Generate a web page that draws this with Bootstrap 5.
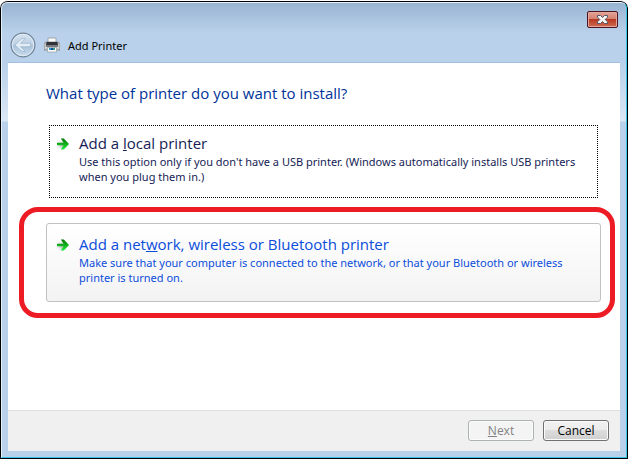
<!DOCTYPE html>
<html lang="en">
<head>
<meta charset="utf-8">
<meta name="viewport" content="width=device-width, initial-scale=1">
<title>Add Printer</title>
<link href="https://cdn.jsdelivr.net/npm/bootstrap@5.3.0/dist/css/bootstrap.min.css" rel="stylesheet">
<style>
  html { background: #fff; }
  body { font-family: "Noto Sans", "Open Sans", sans-serif; font-size: 11px; line-height: 15px; color: #000; background: #000; border-top: 1px solid #fff; border-radius: 8px 8px 0 0; }
  .aero-window {
    margin: 1px 1px 1px 1px; padding: 0 6px 6px 6px;
    border: 1px solid #e4f1fb; border-right: 1px solid #35c4ea; border-bottom: 1px solid #35c4ea;
    border-radius: 6px 6px 0 0;
    background: linear-gradient(#99b4d1 0, #a6c0dc 12px, #b9d1ea 30px, #b9d1ea 60px, #dbe7f5 118px, #b9d1ea 119px);
  }
  .window-bar { height: 59px; padding: 8px 2px 0 2px; }
  .close-btn { width: 31px; height: 17px; border: 1px solid #4a1420; border-radius: 2px; box-shadow: inset 0 0 0 1px #e5a79c; background: linear-gradient(#e3a396 0, #d58271 45%, #b93a22 50%, #cf6c52 100%); }
  .close-btn svg, .nav-back svg { display: block; }
  .caption-row { padding-top: 3px; }
  .client { background: #fff; border-top: 1px solid #a2c0dd; }
  .wizard-body { padding: 19px 19px 0 38px; }
  .wizard-title, .choice-title { font-family: "Open Sans", "Noto Sans", sans-serif; font-size: 15px; line-height: 22px; }
  .wizard-title { color: #003399; }
  .choice-list { padding-top: 18px; gap: 22px; }
  .choice { min-height: 79px; padding: 9px 8px 8px 8px; border: 1px solid transparent; border-radius: 3px; background: none; color: #151c55; }
  .choice-focused { outline: 1px dotted #000; outline-offset: -4px; border-radius: 0; }
  .choice-hot { border-color: #c2c2c2; background: linear-gradient(#fff, #f3f3f3); color: #0b4ddb; }
  .choice-icon { width: 16px; height: 16px; margin: 4px 8px 0 0; }
  .callout-ring { inset: -16px -14px -16px -27px; border: 5px solid #ed1c24; border-radius: 19px; pointer-events: none; }
  .wizard-footer { background: #f0f0f0; border-top: 1px solid #dfdfdf; padding: 9px 11px 10px; gap: 9px; }
  .dialog-btn { width: 66px; height: 21px; padding: 0; border: 1px solid #707070; border-radius: 3px; box-shadow: inset 0 0 0 1px #fbfbfb; background: linear-gradient(#f2f2f2 0, #ebebeb 50%, #dddddd 50%, #cfcfcf 100%); color: #000; font-family: "Open Sans", "Noto Sans", sans-serif; font-size: 12px; line-height: 17px; }
  .dialog-btn:disabled { border-color: #adb2b5; background: #f4f4f4; color: #838383; }
</style>
<script src="https://cdn.jsdelivr.net/npm/bootstrap@5.3.0/dist/js/bootstrap.bundle.min.js"></script>
</head>
<body class="min-vh-100 d-flex flex-column">
<div class="aero-window flex-grow-1 d-flex flex-column">
  <header class="window-bar">
    <div class="d-flex justify-content-end">
      <button type="button" class="close-btn p-0 d-flex align-items-center justify-content-center" aria-label="Close">
        <svg width="13" height="11" viewBox="0 0 13 11"><path d="M1.500 1.500h3l2 2 2-2h3v1.700L9.200 5.500l2.300 2.300v1.700h-3l-2-2-2 2h-3V7.800l2.300-2.300-2.300-2.300z" fill="#f5f5f5" stroke="#535666" stroke-width="1"/></svg>
      </button>
    </div>
    <div class="caption-row d-flex align-items-center">
      <button type="button" class="nav-back border-0 bg-transparent p-0" aria-label="Back">
        <svg width="26" height="28" viewBox="0 0 26 28">
          <defs><linearGradient id="orb" x1="0" y1="0" x2="0" y2="1"><stop offset="0" stop-color="#d5e3f1"/><stop offset=".48" stop-color="#bdd0e3"/><stop offset=".52" stop-color="#a9c2da"/><stop offset="1" stop-color="#c9dcee"/></linearGradient></defs>
          <circle cx="13" cy="14" r="11.900" fill="url(#orb)" stroke="#718398" stroke-width="1.200"/>
          <circle cx="13" cy="14" r="10.700" fill="none" stroke="#e2ecf6" stroke-width="1"/>
          <path d="M5 14l7-6.500h3.200L10.500 12.300H20.500v3.400H10.500l4.700 4.800H12z" fill="#e3edf6" stroke="#8fa9c2" stroke-width=".6" stroke-linejoin="round"/>
        </svg>
      </button>
      <svg class="ms-2 me-2" width="16" height="16" viewBox="0 0 16 16" aria-hidden="true">
        <path d="M4 1h8v6H4z" fill="#fcfcfc" stroke="#96999d" stroke-width=".8"/>
        <path d="M0 6.500l2-1.500h12l2 1.500V13H0z" fill="#c3c5c8" stroke="#777a7e" stroke-width=".7"/>
        <path d="M2.500 5h11l.500 3.500H2z" fill="#303337"/>
        <path d="M2 8.500h12V10H2z" fill="#777b80"/>
        <path d="M1 10.500h14v.8H1z" fill="#ededed"/>
        <path d="M3.500 10.500h9V15h-9z" fill="#fff" stroke="#999c9f" stroke-width=".7"/>
        <path d="M5 11h2v2H5z" fill="#2e9be0"/><path d="M7 11h2v2H7z" fill="#174f9c"/><path d="M9 11h2v2H9z" fill="#3a9a88"/>
      </svg>
      <span>Add Printer</span>
    </div>
  </header>

  <main class="client flex-grow-1 d-flex flex-column">
    <div class="wizard-body flex-grow-1">
      <h1 class="wizard-title fw-normal m-0">What type of printer do you want to install?</h1>
      <div class="choice-list d-flex flex-column">
        <button type="button" class="choice choice-focused w-100 text-start d-flex align-items-start">
          <svg class="choice-icon flex-shrink-0" viewBox="0 0 16 16" aria-hidden="true">
            <defs>
              <linearGradient id="leaf" x1="0" y1="0" x2="0" y2="1"><stop offset="0" stop-color="#087a08"/><stop offset=".45" stop-color="#10a818"/><stop offset="1" stop-color="#20f040"/></linearGradient>
              <radialGradient id="shade"><stop offset="0" stop-color="#a8a8a8"/><stop offset="1" stop-color="#fff" stop-opacity="0"/></radialGradient>
            </defs>
            <ellipse cx="7" cy="9" rx="7.500" ry="6.500" fill="url(#shade)"/>
            <path d="M2 6.800h6.500L5.800 2.500h3L14 8l-5.200 5.500h-3L8.500 9.200H2z" fill="url(#leaf)"/>
          </svg>
          <span class="d-block">
            <span class="choice-title d-block">Add a <u>l</u>ocal printer</span>
            <span class="d-block">Use this option only if you don't have a USB printer. (Windows automatically installs USB printers when you plug them in.)</span>
          </span>
        </button>
        <div class="position-relative">
          <button type="button" class="choice choice-hot w-100 text-start d-flex align-items-start">
            <svg class="choice-icon flex-shrink-0" viewBox="0 0 16 16" aria-hidden="true">
              <ellipse cx="7" cy="9" rx="7.500" ry="6.500" fill="url(#shade)"/>
              <path d="M2 6.800h6.500L5.800 2.500h3L14 8l-5.200 5.500h-3L8.500 9.200H2z" fill="url(#leaf)"/>
            </svg>
            <span class="d-block">
              <span class="choice-title d-block">Add a net<u>w</u>ork, wireless or Bluetooth printer</span>
              <span class="d-block">Make sure that your computer is connected to the network, or that your Bluetooth or wireless printer is turned on.</span>
            </span>
          </button>
          <div class="callout-ring position-absolute"></div>
        </div>
      </div>
    </div>
    <footer class="wizard-footer d-flex justify-content-end">
      <button type="button" class="dialog-btn" disabled><u>N</u>ext</button>
      <button type="button" class="dialog-btn">Cancel</button>
    </footer>
  </main>
</div>
</body>
</html>
